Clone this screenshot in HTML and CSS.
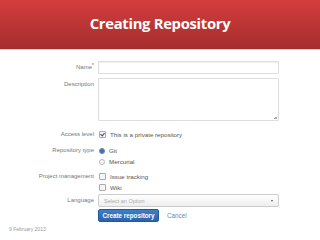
FILE: index.html
```html
<!DOCTYPE html>
<html>
<head>
<meta charset="utf-8">
<link rel="stylesheet" href="styles.css">
</head>
<body>
<div class="header"><h1 class="title">Creating Repository</h1></div>
<div class="rule"></div>
<div class="form">
  <div class="row r-name">
    <div class="label">Name<span class="req">*</span></div>
    <div class="field"><div class="input"></div></div>
  </div>
  <div class="row r-desc">
    <div class="label">Description</div>
    <div class="field"><div class="textarea"><span class="grip"></span></div></div>
  </div>
  <div class="row r-access">
    <div class="label">Access level</div>
    <div class="field"><div class="opt"><span class="cb checked"></span>This is a private repository</div></div>
  </div>
  <div class="row r-type">
    <div class="label">Repository type</div>
    <div class="field">
      <div class="opt"><span class="rb on"></span>Git</div>
      <div class="opt"><span class="rb"></span>Mercurial</div>
    </div>
  </div>
  <div class="row r-pm">
    <div class="label">Project management</div>
    <div class="field">
      <div class="opt"><span class="cb"></span>Issue tracking</div>
      <div class="opt"><span class="cb"></span>Wiki</div>
    </div>
  </div>
  <div class="row r-lang">
    <div class="label">Language</div>
    <div class="field"><div class="select"><span>Select an Option</span><span class="arrow"></span></div></div>
  </div>
  <div class="row r-btn">
    <div class="label"></div>
    <div class="field actions"><span class="btn">Create repository</span><span class="cancel">Cancel</span></div>
  </div>
</div>
<div class="footer">9 February 2013</div>
</body>
</html>
```
FILE: styles.css
```css
html, body { margin: 0; padding: 0; background: #fff; width: 320px; height: 240px; overflow: hidden; }
body { font-family: "Liberation Sans", Arial, sans-serif; color: #555; }
.header {
  height: 49px;
  background: linear-gradient(#d43d3d, #a52d2d);
  display: flex; align-items: center; justify-content: center;
}
.title {
  margin: 0; color: #fff; font-family: "Open Sans", "Liberation Sans", sans-serif;
  font-weight: 700; font-size: 14.8px; letter-spacing: -0.3px; padding-bottom: 3px;
}
.rule { height: 1px; background: #e8c9c9; }
.form { padding-top: 11px; }
.row { display: grid; grid-template-columns: 94px 181px; column-gap: 4px; }
.label { text-align: right; font-size: 6px; color: #777; line-height: 11px; }
.r-name .label, .r-lang .label { line-height: 13px; }
.req { color: #c33; font-size: 5px; vertical-align: top; line-height: 8px; }
.field { display: flex; flex-direction: column; }
.input { height: 11px; border: 1px solid #ddd; border-radius: 1px; box-shadow: inset 0 1px 1px #f0f0f0; }
.r-desc { margin-top: 4px; }
.r-desc .label { line-height: 12px; }
.textarea { height: 41px; border: 1px solid #ddd; border-radius: 1px; position: relative; }
.grip { position: absolute; right: 1px; bottom: 1px; width: 3px; height: 3px; background: linear-gradient(135deg, transparent 50%, #aaa 50%); }
.r-access { margin-top: 8px; }
.r-type { margin-top: 5px; }
.r-pm { margin-top: 4px; }
.r-lang { margin-top: 1px; }
.opt { height: 11px; display: flex; align-items: center; font-size: 6.2px; color: #555; }
.cb { width: 5px; height: 5px; border: 1px solid #aaa; border-radius: 1px; margin: 0 4px 0 1px; background: #f6f6f6; position: relative; }
.cb.checked::after { content: ""; position: absolute; left: 1px; top: 0; width: 2px; height: 3px; border: solid #446; border-width: 0 1px 1px 0; transform: rotate(40deg); }
.rb { width: 4px; height: 4px; border: 1px solid #bbb; border-radius: 50%; margin: 0 4px 0 1px; background: #f6f6f6; }
.rb.on { background: #4a6ea8; border-color: #6a86b6; }
.select {
  height: 11px; border: 1px solid #ccc; border-radius: 2px;
  background: linear-gradient(#fff, #eee);
  display: flex; align-items: center; justify-content: space-between;
  font-size: 5.5px; color: #aaa; padding: 0 5px;
}
.arrow { width: 0; height: 0; border-left: 1.5px solid transparent; border-right: 1.5px solid transparent; border-top: 2px solid #555; }
.r-btn { margin-top: 2px; }
.actions { flex-direction: row; align-items: center; }
.btn {
  width: 61px; height: 13px; border-radius: 2px; display: flex; align-items: center; justify-content: center;
  background: linear-gradient(#3d7fc6, #2b63ab); border: 1px solid #25579a; box-sizing: border-box;
  color: #fff; font-weight: 700; font-size: 6.3px;
}
.cancel { margin-left: 8px; font-size: 6.3px; color: #6a8ab0; }
.footer { margin: 4px 0 0 9px; font-size: 5px; color: #999; }
```
